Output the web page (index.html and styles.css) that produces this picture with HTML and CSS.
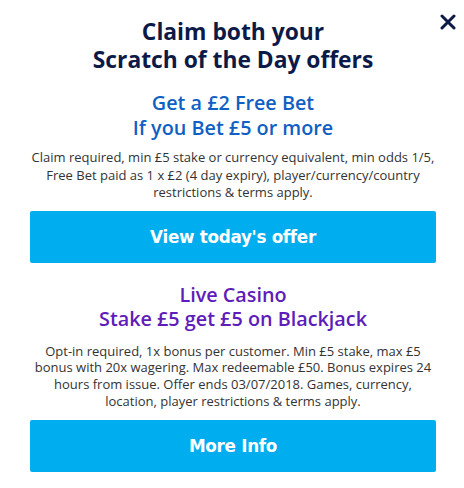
FILE: index.html
```html
<!DOCTYPE html>
<html lang="en">
<head>
<meta charset="utf-8">
<title>Scratch of the Day offers</title>
<link rel="stylesheet" href="styles.css">
</head>
<body>
<div class="modal">
  <button class="close" aria-label="Close">
    <svg width="16" height="16" viewBox="0 0 16 16"><path d="M2 2 L14 14 M14 2 L2 14" stroke="#0b1a47" stroke-width="3" stroke-linecap="round"/></svg>
  </button>
  <h1 class="title">Claim both your<br>Scratch of the Day offers</h1>

  <section class="offer offer-sport">
    <h2 class="offer-heading">Get a £2 Free Bet<br>If you Bet £5 or more</h2>
    <p class="terms">Claim required, min £5 stake or currency equivalent, min odds 1/5, Free Bet paid as 1 x £2 (4 day expiry), player/currency/country restrictions &amp; terms apply.</p>
    <a class="cta" href="#">View today's offer</a>
  </section>

  <section class="offer offer-casino">
    <h2 class="offer-heading">Live Casino<br>Stake £5 get £5 on Blackjack</h2>
    <p class="terms">Opt-in required, 1x bonus per customer. Min £5 stake, max £5 bonus with 20x wagering. Max redeemable £50. Bonus expires 24 hours from issue. Offer ends 03/07/2018. Games, currency, location, player restrictions &amp; terms apply.</p>
    <a class="cta" href="#">More Info</a>
  </section>
</div>
</body>
</html>
```

FILE: styles.css
```css
* { box-sizing: border-box; }
html, body {
  margin: 0;
  padding: 0;
  background: #ffffff;
}
body {
  font-family: "Open Sans", "Noto Sans", sans-serif;
  color: #333333;
}
.modal {
  position: relative;
  display: flex;
  flex-direction: column;
  padding: 18px 28px 0 30px;
}
.close {
  position: absolute;
  top: 14px;
  right: 8px;
  width: 16px;
  height: 16px;
  padding: 0;
  border: 0;
  background: none;
  display: flex;
}
.title {
  margin: 0;
  text-align: center;
  font-size: 22.8px;
  line-height: 28px;
  font-weight: 700;
  color: #0b1a47;
}
.offer {
  display: flex;
  flex-direction: column;
}
.offer-sport { margin-top: 17px; }
.offer-casino { margin-top: 20px; }
.offer-heading {
  margin: 0;
  text-align: center;
  font-size: 19.8px;
  line-height: 24.5px;
  font-weight: 600;
}
.offer-sport .offer-heading { color: #0f5fc4; }
.offer-casino .offer-heading { color: #5e1cba; }
.terms {
  margin: 9px 0 9px;
  text-align: center;
  font-size: 13px;
  line-height: 17.5px;
  color: #333333;
}
.offer-casino .terms {
  margin: 11px 0 11px;
  line-height: 16.7px;
}
.cta {
  display: flex;
  align-items: center;
  justify-content: center;
  height: 52px;
  border-radius: 2px;
  background: #00aeef;
  color: #ffffff;
  text-decoration: none;
  font-family: "DejaVu Sans", "Open Sans", sans-serif;
  font-weight: 700;
  font-size: 16.8px;
  letter-spacing: -0.3px;
}
```
